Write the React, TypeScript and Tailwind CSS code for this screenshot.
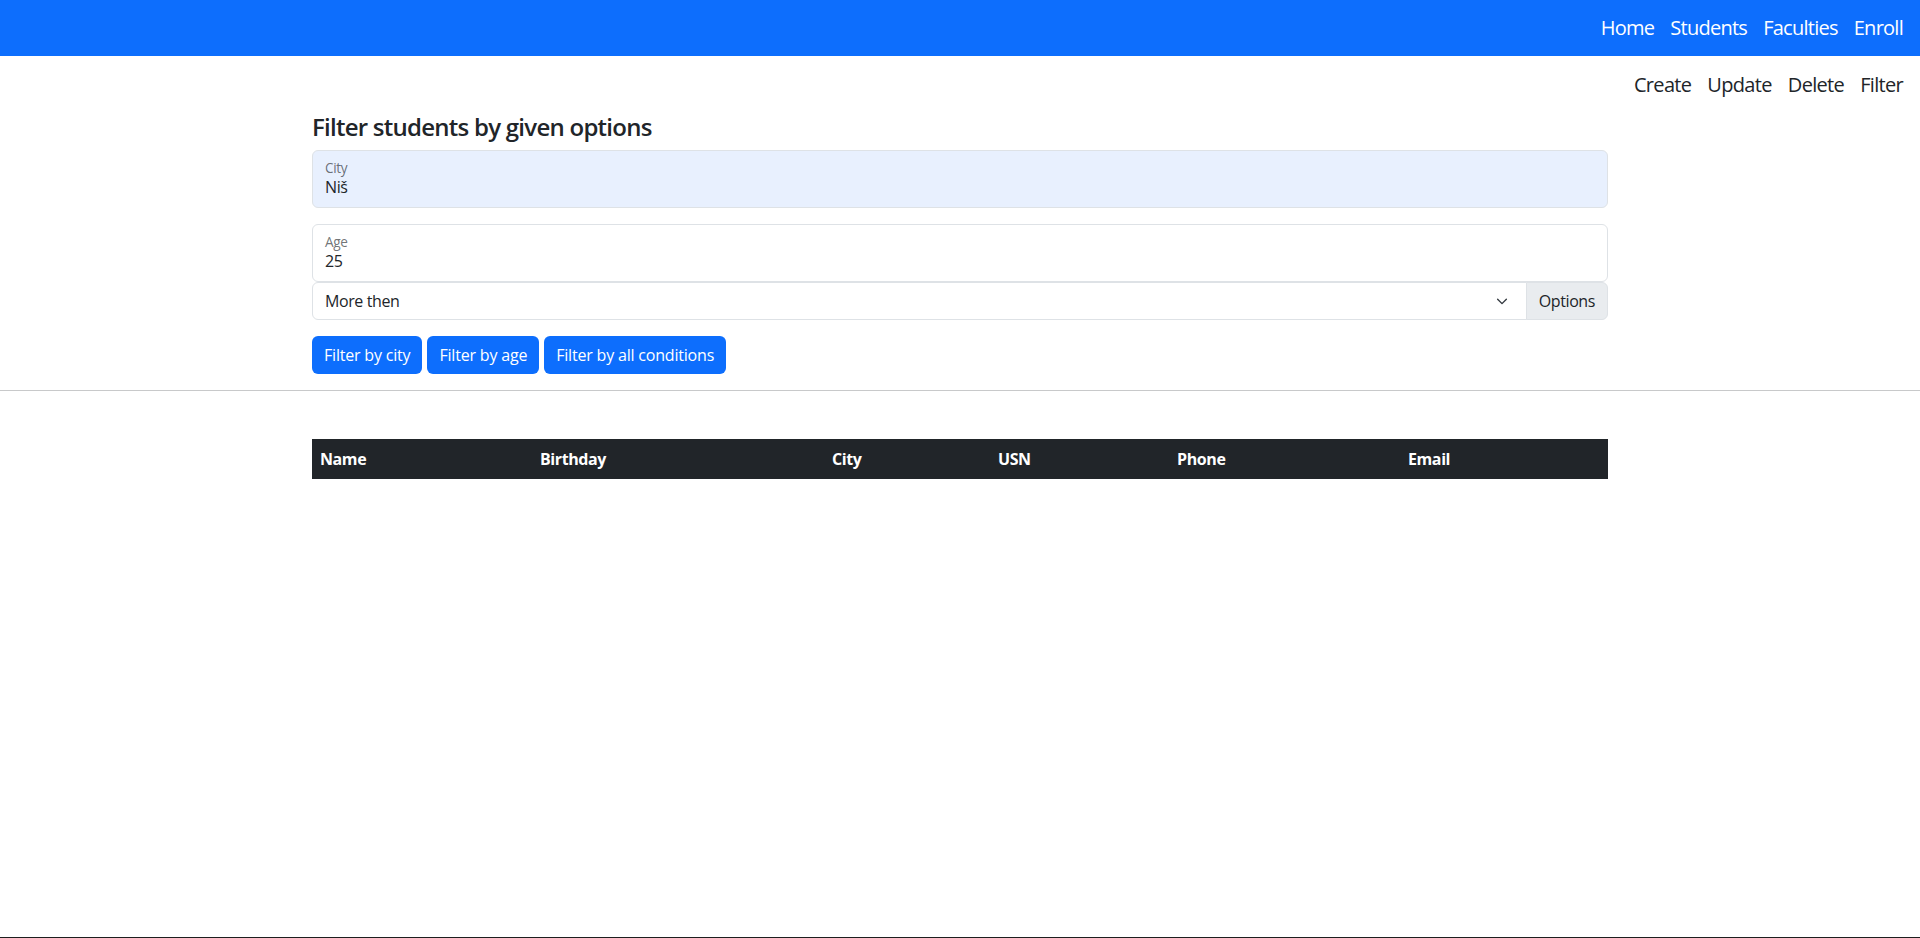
const TOP_LINKS = ['Home', 'Students', 'Faculties', 'Enroll'];
const SUB_LINKS = ['Create', 'Update', 'Delete', 'Filter'];
const FILTER_BUTTONS = ['Filter by city', 'Filter by age', 'Filter by all conditions'];

const COLUMNS = [
  { label: 'Name', width: 'w-[220px]' },
  { label: 'Birthday', width: 'w-[292px]' },
  { label: 'City', width: 'w-[166px]' },
  { label: 'USN', width: 'w-[179px]' },
  { label: 'Phone', width: 'w-[231px]' },
  { label: 'Email', width: 'w-[208px]' },
];

const font = "font-['Segoe_UI','Open_Sans','Noto_Sans',sans-serif] tracking-[-0.025em]";

function FloatingField({ label, value, filled, className = '' }: { label: string; value: string; filled?: boolean; className?: string }) {
  return (
    <div
      className={`relative h-[58px] border border-[#dee2e6] px-3 ${filled ? 'bg-[#e8f0fe]' : 'bg-white'} ${className}`}
    >
      <span className="absolute left-3 top-[7px] text-[13.6px] leading-5 text-[#212529a6]">{label}</span>
      <span className="absolute left-3 top-[24px] text-base leading-6 text-[#212529]">{value}</span>
    </div>
  );
}

export default function App() {
  return (
    <div className={`${font} flex min-h-[938px] flex-col bg-white text-[#212529]`}>
      <nav className="flex h-[56px] items-center justify-end bg-[#0d6efd] pr-[9px]">
        {TOP_LINKS.map(l => (
          <a key={l} className="px-2 text-[20px] leading-[30px] tracking-[-0.037em] text-white">{l}</a>
        ))}
      </nav>

      <div className="flex h-[57px] items-center justify-end pr-[9px]">
        {SUB_LINKS.map(l => (
          <a key={l} className="px-2 text-[20px] leading-[30px] tracking-[-0.034em] text-[#212529]">{l}</a>
        ))}
      </div>

      <div className="mx-auto w-[1296px]">
        <h4 className="mb-2 text-[24px] font-semibold leading-[28.8px] tracking-[-0.031em]">Filter students by given options</h4>

        <FloatingField label="City" value="Niš" filled className="mb-4 rounded-md" />

        <FloatingField label="Age" value="25" className="rounded-md" />
        <div className="mb-4 flex h-[38px]">
          <div className="flex flex-1 items-center justify-between rounded-l-md border border-[#dee2e6] pl-3 pr-[17px] text-[16px]">
            <span>More then</span>
            <svg width="14" height="14" viewBox="0 0 16 16" fill="none" stroke="#343a40" strokeWidth="1.6" strokeLinecap="round" strokeLinejoin="round">
              <path d="M3 6l5 5 5-5" />
            </svg>
          </div>
          <div className="-ml-px flex items-center rounded-r-md border border-[#dee2e6] bg-[#e9ecef] px-3 text-[16px]">
            Options
          </div>
        </div>

        <div className="flex gap-[5px]">
          {FILTER_BUTTONS.map(b => (
            <button key={b} className="h-[38px] rounded-md bg-[#0d6efd] px-3 text-[16px] tracking-[-0.012em] text-white">{b}</button>
          ))}
        </div>
      </div>

      <hr className="mt-4 border-0 border-t border-[#c8c9ca]" />

      <div className="mx-auto mt-12 w-[1296px]">
        <table className="w-full table-fixed border-collapse">
          <thead>
            <tr className="h-10 bg-[#212529]">
              {COLUMNS.map(c => (
                <th key={c.label} className={`${c.width} px-2 text-left text-[16px] font-bold text-white`}>{c.label}</th>
              ))}
            </tr>
          </thead>
          <tbody />
        </table>
      </div>

      <div className="flex-1" />
      <div className="h-px bg-[#1e1e1e]" />
    </div>
  );
}
